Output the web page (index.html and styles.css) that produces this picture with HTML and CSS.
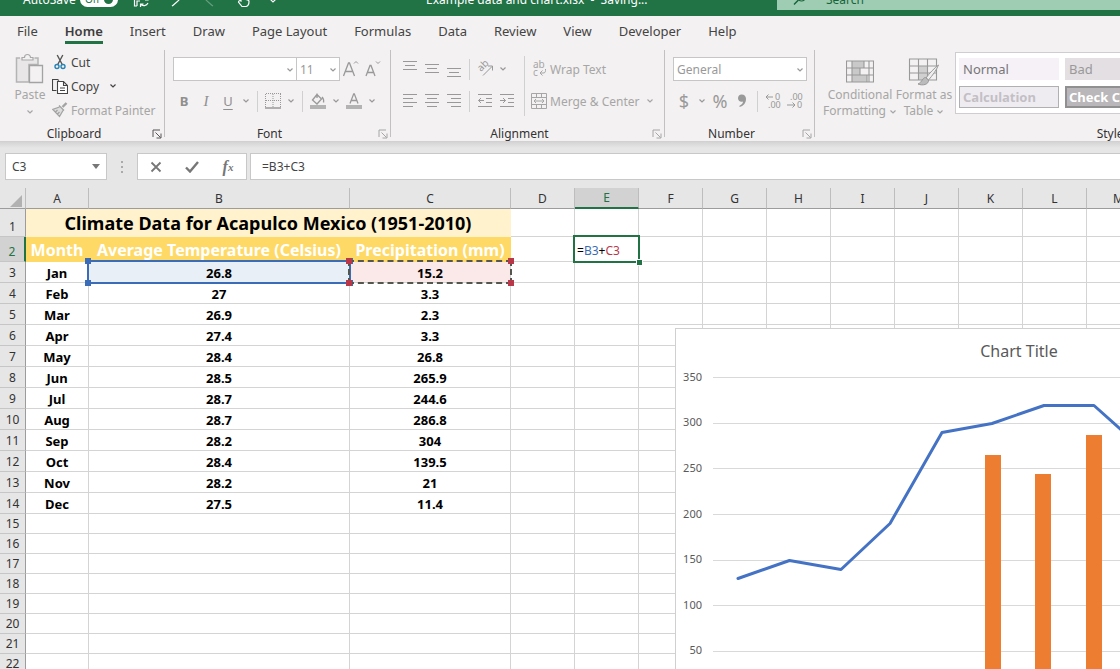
FILE: index.html
```html
<!DOCTYPE html>
<html lang="en">
<head>
<meta charset="utf-8">
<title>Example data and chart.xlsx</title>
<link rel="stylesheet" href="styles.css">
</head>
<body>
<svg class="defs" aria-hidden="true">
  <symbol id="chev" viewBox="0 0 8 8"><path d="M1.500 2.500 4 5l2.500-2.500" fill="none" stroke="currentColor" stroke-width="1.200"/></symbol>
  <symbol id="launch" viewBox="0 0 10 10"><path d="M1 8V1h7M3.500 3.500l5 5M9 4.500V9H4.500" fill="none" stroke="currentColor"/></symbol>
</svg>

<header class="titlebar">
  <div class="titlebar-inner">
    <span class="autosave">AutoSave</span>
    <button class="toggle" aria-label="AutoSave off">Off<i></i></button>
    <div class="quick">
      <svg width="17" height="18" viewBox="0 0 17 18"><path d="M4 16H1.500V2H12v3M4 16v-5h3M15 7v3h-3M15 10a4.500 4.500 0 0 0-7-1M7.500 17v-3h3M7.500 14a4.500 4.500 0 0 0 7.500-1" fill="none" stroke="#fff" stroke-width="1.200"/></svg>
      <svg width="17" height="18" viewBox="0 0 17 18"><path d="M3 2v5h5M3 7c3-4 10-5 11-1 .5 3-4 6-9 10" fill="none" stroke="#fff" stroke-width="1.200"/></svg>
      <svg width="17" height="18" viewBox="0 0 17 18" opacity=".3"><path d="M14 2v5H9M14 7C11 3 4 2 3 6c-.5 3 4 6 9 10" fill="none" stroke="#fff" stroke-width="1.200"/></svg>
      <svg width="17" height="18" viewBox="0 0 17 18"><path d="M6 11V3.500c0-2 2.500-2 2.500 0V9l4 .8c1 .2 1.500.8 1.500 1.700 0 2.500-1 4.500-3 5H7L3.500 12c.3-1.500 1.500-1.500 2.500-1z" fill="none" stroke="#fff" stroke-width="1.200"/></svg>
      <svg class="more" width="8" height="18" viewBox="0 0 8 18"><path d="M1.500 9.500 4 12 6.500 9.500" fill="none" stroke="#fff" stroke-width="1.200"/></svg>
    </div>
    <span class="filename">Example data and chart.xlsx&nbsp; -&nbsp; Saving...</span>
    <label class="search">
      <svg width="14" height="14" viewBox="0 0 14 14"><circle cx="8.500" cy="5" r="4" fill="none" stroke="#17643a" stroke-width="1.200"/><path d="M5.500 8 1 12.500" stroke="#17643a" stroke-width="1.500"/></svg>
      <input type="text" placeholder="Search" aria-label="Search">
    </label>
  </div>
</header>

<nav class="tabs">
  <a href="#">File</a><a href="#" class="active">Home</a><a href="#">Insert</a><a href="#">Draw</a><a href="#">Page Layout</a><a href="#">Formulas</a><a href="#">Data</a><a href="#">Review</a><a href="#">View</a><a href="#">Developer</a><a href="#">Help</a>
</nav>

<section class="ribbon">
  <div class="group clipboard">
    <div class="group-body">
      <button class="big dim paste">
        <svg width="30" height="32" viewBox="0 0 30 32"><path d="M5 5H1.500v24H14V11.500h9V5h-3.500" fill="#e8e6e6" stroke="#b4b4b4" stroke-width="1.500"/><path d="M7 7V4.500h2.500a3 3 0 0 1 6 0H18V7z" fill="#f3f1f1" stroke="#a9a9a9" stroke-width="1.200"/><path d="M14.500 12.500h13v17h-13z" fill="#f3f1f1" stroke="#a3a3a3" stroke-width="1.300"/></svg>
        <span>Paste</span>
        <svg class="chev"><use href="#chev"/></svg>
      </button>
      <div class="stack">
        <button class="cmd"><svg width="16" height="16" viewBox="0 0 16 16"><path d="M5.200 1 10.500 11M10.800 1 5.500 11" stroke="#555" stroke-width="1.400" fill="none"/><circle cx="5" cy="12.500" r="2" fill="none" stroke="#2583b5" stroke-width="1.400"/><circle cx="11" cy="12.500" r="2" fill="none" stroke="#2583b5" stroke-width="1.400"/></svg>Cut</button>
        <button class="cmd"><svg width="16" height="16" viewBox="0 0 16 16"><path d="M4.500 12.500h-4V1.500h5l1.500 1" fill="none" stroke="#444" stroke-width="1.100"/><path d="M5.500 3.500h6l4 4v8h-10zM11.500 3.500v4h4M8 10h5M8 12.500h5" fill="#fff" stroke="#444" stroke-width="1.100"/></svg>Copy<svg class="chev"><use href="#chev"/></svg></button>
        <button class="cmd dim"><svg width="16" height="16" viewBox="0 0 16 16"><path d="M14.500 1 10.500 5" stroke="#a3a3a3" stroke-width="2.400"/><path d="M7 3.500l5 5M7.500 5 .8 7.500 7.500 14.500 11 8.500M3.500 10l2-2M5.500 12l2-2" fill="#ddd" stroke="#a3a3a3" stroke-width="1.300"/></svg>Format Painter</button>
      </div>
    </div>
    <div class="group-label"><span>Clipboard</span><button class="launch" aria-label="Clipboard options"><svg><use href="#launch"/></svg></button></div>
  </div>

  <div class="group font">
    <div class="group-body rows">
      <div class="row">
        <label class="combo family"><select aria-label="Font name"><option></option></select><svg class="chev"><use href="#chev"/></svg></label>
        <label class="combo size"><select aria-label="Font size"><option>11</option></select><svg class="chev"><use href="#chev"/></svg></label>
        <button class="tool" aria-label="Grow font"><svg width="18" height="20" viewBox="0 0 18 20"><path d="M1.500 17 6.500 4h1l5 13M3.500 12.500h7" fill="none" stroke="currentColor" stroke-width="1.300"/><path d="m12 4.500 2-2 2 2" fill="none" stroke="currentColor"/></svg></button>
        <button class="tool" aria-label="Shrink font"><svg width="18" height="20" viewBox="0 0 18 20"><path d="M2 17 6 6.500h1L11 17M3.500 13.500h6" fill="none" stroke="currentColor" stroke-width="1.300"/><path d="m12 2.500 2 2 2-2" fill="none" stroke="currentColor"/></svg></button>
      </div>
      <div class="row">
        <button class="tool letter b">B</button><button class="tool letter i">I</button><button class="tool letter u">U</button><svg class="chev"><use href="#chev"/></svg>
        <i class="sep"></i>
        <button class="tool" aria-label="Borders"><svg width="16" height="16" viewBox="0 0 16 16"><path d="M1 .5h15M1 7.500h15M.5 1v13M8 1v13M15.500 1v13" stroke="currentColor" stroke-dasharray="1 1" fill="none"/><path d="M0 15h16" stroke="currentColor" stroke-width="1.500"/></svg></button><svg class="chev"><use href="#chev"/></svg>
        <i class="sep"></i>
        <button class="tool" aria-label="Fill color"><svg width="16" height="16" viewBox="0 0 16 16"><path d="M7 1.500 2.500 7 7 11l4.500-5zM7 .5V5M12 4c1 1 2 3 1.500 5.500" fill="none" stroke="currentColor" stroke-width="1.300"/><path d="M0 12h16v4H0z" fill="#b3b3b3"/></svg></button><svg class="chev"><use href="#chev"/></svg>
        <button class="tool" aria-label="Font color"><svg width="16" height="16" viewBox="0 0 16 16"><path d="M4 10.500 7.700.8h.6l3.700 9.700M5.200 7.500h5.600" fill="none" stroke="currentColor" stroke-width="1.300"/><path d="M0 12h16v4H0z" fill="#b3b3b3"/></svg></button><svg class="chev"><use href="#chev"/></svg>
      </div>
    </div>
    <div class="group-label"><span>Font</span><button class="launch dim" aria-label="Font options"><svg><use href="#launch"/></svg></button></div>
  </div>

  <div class="group alignment">
    <div class="group-body">
      <div class="rows">
        <div class="row">
          <button class="tool" aria-label="Top align"><svg width="14" height="18" viewBox="0 0 14 18"><path d="M0 1.500h14M2 5.500h10M0 9.500h14" stroke="currentColor"/></svg></button>
          <button class="tool" aria-label="Middle align"><svg width="14" height="18" viewBox="0 0 14 18"><path d="M0 4.500h14M2 8.500h10M0 12.500h14" stroke="currentColor"/></svg></button>
          <button class="tool" aria-label="Bottom align"><svg width="14" height="18" viewBox="0 0 14 18"><path d="M0 8.500h14M2 12.500h10M0 16.500h14" stroke="currentColor"/></svg></button>
          <i class="sep"></i>
          <button class="tool" aria-label="Orientation"><svg class="spill" width="18" height="18" viewBox="0 0 18 18"><text x="5" y="12" class="glyph" transform="rotate(-45 5 12)">ab</text><path d="M7 15.500 16 6.500M12 6h4.500v4.500" fill="none" stroke="currentColor"/></svg></button><svg class="chev"><use href="#chev"/></svg>
        </div>
        <div class="row">
          <button class="tool" aria-label="Align left"><svg width="14" height="14" viewBox="0 0 14 14"><path d="M0 .5h14M0 4.500h10M0 8.500h14M0 12.500h10" stroke="currentColor"/></svg></button>
          <button class="tool" aria-label="Center"><svg width="14" height="14" viewBox="0 0 14 14"><path d="M0 .5h14M2 4.500h10M0 8.500h14M2 12.500h10" stroke="currentColor"/></svg></button>
          <button class="tool" aria-label="Align right"><svg width="14" height="14" viewBox="0 0 14 14"><path d="M0 .5h14M4 4.500h10M0 8.500h14M4 12.500h10" stroke="currentColor"/></svg></button>
          <i class="sep"></i>
          <button class="tool" aria-label="Decrease indent"><svg width="14" height="14" viewBox="0 0 14 14"><path d="M0 .5h14M8 4.500h6M8 8.500h6M0 12.500h14M6 6.500H.5M3 4 .5 6.500 3 9" fill="none" stroke="currentColor"/></svg></button>
          <button class="tool" aria-label="Increase indent"><svg width="14" height="14" viewBox="0 0 14 14"><path d="M0 .5h14M8 4.500h6M8 8.500h6M0 12.500h14M0 6.500h5.500M3 4l2.500 2.500L3 9" fill="none" stroke="currentColor"/></svg></button>
        </div>
      </div>
      <i class="sep tall"></i>
      <div class="rows">
        <button class="cmd dim row"><svg class="spill" width="16" height="18" viewBox="0 0 16 18"><text class="glyph"><tspan x="2" y="8">ab</tspan><tspan x="2" y="16">c</tspan></text><path d="M14.500 9v1.500c0 2-1 2.500-2.500 2.500H9.500M11.500 10.500 9 13l2.500 2.500" fill="none" stroke="currentColor"/></svg>Wrap Text</button>
        <button class="cmd dim row"><svg width="16" height="16" viewBox="0 0 16 16"><path d="M.5.5h15v15H.5zM.5 4.500h15M.5 11.500h15M5.500.5v4M10.500.5v4M5.500 11.500v4M10.500 11.500v4M3 8h10M5 6 3 8l2 2M11 6l2 2-2 2" fill="none" stroke="currentColor"/></svg>Merge &amp; Center<svg class="chev"><use href="#chev"/></svg></button>
      </div>
    </div>
    <div class="group-label"><span>Alignment</span><button class="launch dim" aria-label="Alignment options"><svg><use href="#launch"/></svg></button></div>
  </div>

  <div class="group number">
    <div class="group-body rows">
      <div class="row"><label class="combo format"><select aria-label="Number format"><option>General</option></select><svg class="chev"><use href="#chev"/></svg></label></div>
      <div class="row">
        <button class="tool sym">$</button><svg class="chev"><use href="#chev"/></svg>
        <button class="tool sym">%</button>
        <button class="tool sym" aria-label="Comma style"><svg width="10" height="14" viewBox="0 0 10 14"><path d="M4.500.5C7.500.5 9 2.300 9 5c0 4-2.500 7-6.500 8v-1.300C5 10.500 6 9.200 6 7.500 3 8.300 1 6.500 1 4.200 1 2 2.500.5 4.500.5z" fill="currentColor"/></svg></button>
        <i class="sep"></i>
        <button class="tool" aria-label="Increase decimal"><svg class="spill" width="16" height="16" viewBox="0 0 16 16"><text class="digits"><tspan x="10" y="7">0</tspan><tspan x="3" y="15">.00</tspan></text><path d="M8 4H1M3.500 1.500 1 4l2.500 2.500" fill="none" stroke="currentColor"/></svg></button>
        <button class="tool" aria-label="Decrease decimal"><svg class="spill" width="16" height="16" viewBox="0 0 16 16"><text class="digits"><tspan x="3" y="7">.00</tspan><tspan x="10" y="15">0</tspan></text><path d="M0 12h8M5.500 9.500 8 12l-2.500 2.500" fill="none" stroke="currentColor"/></svg></button>
      </div>
    </div>
    <div class="group-label"><span>Number</span><button class="launch dim" aria-label="Number options"><svg><use href="#launch"/></svg></button></div>
  </div>

  <div class="group styles">
    <div class="group-body">
      <button class="big dim cond">
        <svg width="28" height="24" viewBox="0 0 28 24"><path d="M6 1h12v7H6zM6 8h8v7H6zM6 15h15v7H6z" fill="#c9c9c9"/><path d="M.5 1h27v21H.5zM.5 8h27M.5 15h27M6 1v21M14 8v7M18 1v7M21 15v7M23 1v21" fill="none" stroke="#999" stroke-width="1.100"/></svg>
        <span>Conditional</span>
        <span>Formatting<svg class="chev"><use href="#chev"/></svg></span>
      </button>
      <button class="big dim fmt">
        <svg width="32" height="28" viewBox="0 0 32 28"><path d="M10 8h9v14h-9z" fill="#d0d0d0"/><path d="M1.500 1h27v21h-27zM1.500 8h27M1.500 15h27M10.500 1v21M19.500 1v21" fill="none" stroke="#999" stroke-width="1.100"/><path d="M30.500 7c-4 3-9 8-12.500 13l2.500 2c4-4.500 8-10 10-15z" fill="#eee" stroke="#999"/><path d="M17.500 19.500c-3 0-3 4.500-7.500 6.500 4.500 2 11 .5 10.500-4z" fill="#bbb" stroke="#999"/></svg>
        <span>Format as</span>
        <span>Table<svg class="chev"><use href="#chev"/></svg></span>
      </button>
      <div class="gallery">
        <button class="style normal">Normal</button>
        <button class="style bad">Bad</button>
        <button class="style calc">Calculation</button>
        <button class="style check">Check Cell</button>
      </div>
    </div>
    <div class="group-label"><span>Styles</span></div>
  </div>
</section>

<section class="formula">
  <label class="namebox"><input type="text" value="C3" aria-label="Name box"><svg width="8" height="5" viewBox="0 0 8 5"><path d="M0 0h8L4 5z" fill="#777"/></svg></label>
  <span class="dots"><i></i><i></i><i></i></span>
  <div class="fxbuttons">
    <button aria-label="Cancel"><svg width="12" height="12" viewBox="0 0 12 12"><path d="m1.500 1.500 9 9M10.500 1.500l-9 9" stroke="#777" stroke-width="1.800"/></svg></button>
    <button aria-label="Enter"><svg width="14" height="12" viewBox="0 0 14 12"><path d="m1 6.500 4 4L13 1" fill="none" stroke="#777" stroke-width="2.400"/></svg></button>
    <button class="fx" aria-label="Insert function">f<sub>x</sub></button>
  </div>
  <input class="formula-input" type="text" value="=B3+C3" aria-label="Formula">
</section>

<main class="sheet">
  <table>
    <colgroup><col class="c-head"><col class="c-a"><col class="c-b"><col class="c-c"><col span="12" class="c-std"></colgroup>
    <thead>
      <tr><th class="corner"><svg width="12" height="12" viewBox="0 0 12 12"><path d="M12 0v12H0z" fill="#b1b1b1"/></svg></th><th>A</th><th>B</th><th>C</th><th>D</th><th class="on">E</th><th>F</th><th>G</th><th>H</th><th>I</th><th>J</th><th>K</th><th>L</th><th>M</th><th></th><th></th></tr>
    </thead>
    <tbody id="rows"></tbody>
  </table>

  <figure class="chart">
    <svg width="688" height="380" viewBox="1 1 688 380" role="img" aria-label="Chart Title">
      <text class="chart-title" x="344" y="29">Chart Title</text>
      <g class="axis"><text x="27" y="53">350</text><text x="27" y="98">300</text><text x="27" y="144">250</text><text x="27" y="190">200</text><text x="27" y="235">150</text><text x="27" y="281">100</text><text x="27" y="326">50</text></g>
      <path class="gridlines" d="M38 49.500h630M38 95.500h630M38 140.500h630M38 186.500h630M38 232.500h630M38 277.500h630M38 323.500h630"/>
      <path fill="#ed7d31" d="M310 127h16v242h-16zM360 146h16v223h-16zM411 107h16v262h-16z"/>
      <path class="series" d="M63 250.500 114.500 232.500 166 241.500 215 195.500 267 104.500 317 95.500 369 77.500H419L470 123"/>
    </svg>
  </figure>
</main>
<script src="sheet.js"></script>
</body>
</html>
```
FILE: styles.css
```css
* { box-sizing: border-box; }
body {
  margin: 0;
  height: 100vh;
  overflow: hidden;
  display: flex;
  flex-direction: column;
  background: #e6e6e6;
  color: #444;
  font-family: "Noto Sans", "Open Sans", sans-serif;
  font-size: 12px;
}
button, input, select { font: inherit; color: inherit; margin: 0; padding: 0; border: 0; background: none; }
input, select { outline: 0; min-width: 0; }
svg { display: block; flex: none; }
.defs { position: absolute; width: 0; height: 0; }
.chev { width: 8px; height: 8px; }
.spill { overflow: visible; }

/* title bar: only its lower half shows above the tabs */
.titlebar { height: 16px; flex: none; overflow: hidden; display: flex; flex-direction: column; justify-content: flex-end; background: #217346; color: #fff; }
.titlebar-inner { height: 34px; flex: none; display: flex; align-items: center; padding-left: 23px; }
.autosave { width: 57px; }
.toggle { width: 38px; height: 15px; display: flex; align-items: center; justify-content: space-between; padding: 0 5px; border-radius: 8px; background: #fff; color: #217346; font-size: 10px; }
.toggle i { width: 9px; height: 9px; border-radius: 50%; background: #217346; }
.quick { display: flex; gap: 17px; margin-left: 15px; width: 293px; }
.filename { width: 351px; white-space: nowrap; }
.search { flex: 1; height: 22px; display: flex; align-items: center; gap: 19px; padding-left: 16px; background: #9fcdb3; color: #17643a; }
.search input { width: 200px; }
.search input::placeholder { color: #17643a; opacity: 1; }

.tabs { flex: none; display: flex; gap: 27px; height: 32px; padding-left: 17px; background: #f3f1f1; font-size: 13px; line-height: 30px; }
.tabs a { color: #444; text-decoration: none; white-space: nowrap; }
.tabs .active { font-weight: 600; color: #3d3d3d; background: linear-gradient(#217346, #217346) 0 25px / 100% 3px no-repeat; }

.ribbon { flex: none; display: flex; height: 94px; overflow: hidden; background: #f3f1f1; border-bottom: 1px solid #d2d0d0; }
.group { flex: none; display: flex; flex-direction: column; margin: 2px 0 4px; border-right: 1px solid #c2c0c0; }
.group-body { flex: none; display: flex; height: 76px; }
.group-label { flex: none; position: relative; height: 16px; line-height: 16px; text-align: center; color: #333; }
.launch { position: absolute; right: 2px; top: 3px; color: #555; }
.launch svg { width: 10px; height: 10px; }
.dim, .cmd.dim { color: #a6a6a6; }
.clipboard { width: 165px; }
.font { width: 226px; }
.alignment { width: 274px; }
.number { width: 150px; }
.styles { min-width: 596px; border-right: 0; }
.group-label span { padding-right: 16px; }
.styles .group-label span { padding-right: 0; }

.big { display: flex; flex-direction: column; align-items: center; line-height: 16px; }
.big .chev { margin-top: 5px; }
.big span { display: flex; gap: 3px; }
.paste { width: 44px; padding: 3px 0 0; margin-left: 8px; }
.paste > svg:first-child { margin-bottom: 2px; }
.stack { display: grid; grid-template-rows: repeat(3, 24px); }
.cmd { display: flex; align-items: center; gap: 3px; white-space: nowrap; }
.cmd .chev { margin-left: 7px; }

.rows { display: flex; flex-direction: column; gap: 8px; padding: 7px 0 0 8px; }
.tall + .rows { padding-left: 6px; }
.row { display: flex; align-items: center; height: 24px; color: #999; }
.combo { position: relative; display: flex; height: 24px; border: 1px solid #c6c6c6; background: #fff; }
.combo select { flex: 1; appearance: none; padding-left: 3px; color: #999; }
.combo .chev { position: absolute; right: 2px; top: 8px; }
.family { width: 124px; }
.size { width: 43px; border-left: 0; }
.format { width: 134px; }
.tool { width: 22px; height: 24px; display: flex; align-items: center; justify-content: center; }
.row > .chev { margin: 0 3px; }
.letter { font-size: 13px; color: #8f8f8f; }
.b { font-weight: 700; }
.i { font-family: "Liberation Serif", serif; font-style: italic; font-size: 15px; }
.u { text-decoration: underline; text-underline-offset: 3px; }
.sep { width: 1px; height: 21px; margin: 0 4px; background: #d0d0d0; }
.sep.tall { height: 60px; margin: 6px 0 0 6px; }
.sym { font-size: 18px; }
.glyph { font-size: 10px; fill: currentColor; }
.digits { font-size: 9px; fill: currentColor; }

.styles .big { padding-top: 7px; width: 62px; }
.styles .cond { width: 66px; margin-left: 12px; }
.styles .big > svg { height: 30px; }
.gallery { flex: 1; display: grid; grid-template-columns: 100px 1fr; grid-template-rows: 22px 22px; gap: 6px; height: 62px; margin-top: 2px; padding: 5px 3px; border: 1px solid #cfcdcf; background: #fff; }
.style { text-align: left; padding-left: 4px; font-size: 13px; line-height: 20px; }
.normal { background: #f5f1f7; color: #777; }
.bad { background: #e3dfe3; color: #999; }
.calc { background: #efecf1; border: 1px solid #b0b0b0; color: #c3bfc5; font-weight: 700; line-height: 18px; padding-left: 3px; }
.check { background: #b9b7b9; border: 2px solid #909090; color: #fff; font-weight: 700; line-height: 16px; padding-left: 2px; }

.formula { flex: none; display: flex; height: 46px; padding: 11px 0 8px 5px; background: linear-gradient(#d4d4d4, #e6e6e6 6px); }
.namebox { width: 102px; display: flex; align-items: center; padding: 0 6px; border: 1px solid #c8c8c8; background: #fff; }
.namebox input { flex: 1; }
.dots { width: 30px; display: flex; flex-direction: column; align-items: center; justify-content: center; gap: 3px; }
.dots i { width: 2px; height: 2px; background: #aaa; }
.fxbuttons { width: 110px; display: flex; border: 1px solid #c8c8c8; background: #fff; }
.fxbuttons button { flex: 1; display: flex; align-items: center; justify-content: center; }
.fxbuttons .fx { font: italic 700 16px "Liberation Serif", serif; color: #777; }
.fx sub { font-size: 11px; }
.formula-input { flex: 1; margin-left: 3px; padding-left: 11px; border: 1px solid #c8c8c8; border-right: 0; background: #fff; }

.sheet { position: relative; flex: 1; min-height: 0; overflow: hidden; background: #fff; color: #000; }
.sheet table { table-layout: fixed; width: 1279px; border-collapse: separate; border-spacing: 0; }
.c-head { width: 26px; }
.c-a { width: 63px; }
.c-b { width: 261px; }
.c-c { width: 161px; }
.c-std { width: 64px; }
.sheet th { padding: 0; background: #e6e6e6; color: #333; font-weight: 400; border-right: 1px solid #bdbdbd; border-bottom: 1px solid #9c9c9c; }
.sheet thead th { height: 21px; padding-top: 1px; line-height: 18px; }
.sheet thead th.on { background: #d2d2d2; color: #217346; border-bottom: 2px solid #217346; }
.corner svg { margin: 4px 0 0 10px; }
.sheet tbody th { border-right-color: #9c9c9c; border-bottom-color: #c6c6c6; vertical-align: bottom; line-height: 18px; }
.sheet tbody th.on { background: #d2d2d2; color: #217346; border-right: 2px solid #217346; }
.sheet td { position: relative; padding: 0; border-right: 1px solid #d4d4d4; border-bottom: 1px solid #d4d4d4; text-align: center; white-space: nowrap; }
.h28 { height: 28px; }
.h25 { height: 25px; }
.h21 { height: 21px; }
.h20 { height: 20px; }
.sheet .data { font-weight: 700; font-size: 13px; line-height: 18px; padding-top: 2px; }
.sheet .title { background: #fff2cc; border-color: #fff2cc; font-weight: 700; font-size: 18px; line-height: 26px; }
.sheet .field { background: #ffd966; border-color: #ffd966; color: #fff; font-weight: 700; font-size: 16px; line-height: 22px; padding-top: 2px; }
.sheet .edit { text-align: left; padding: 2px 0 0 2px; }
.ref-b { color: #3a6db5; }
.ref-c { color: #b8384a; }

/* range frames lie over the cell borders */
.frame { position: absolute; inset: -2px; border: 2px solid; z-index: 1; }
.frame i { position: absolute; width: 6px; height: 6px; background: #3b6cb8; }
.frame i:nth-child(1) { left: -4px; top: -4px; }
.frame i:nth-child(2) { right: -4px; top: -4px; }
.frame i:nth-child(3) { left: -4px; bottom: -4px; }
.frame i:nth-child(4) { right: -4px; bottom: -4px; }
.sheet .blue { background: #e8eff7; }
.sheet .pink { background: #fbe9ea; }
.blue .frame { color: #3b6cb8; }
.pink .frame { border: 2px dashed #55564e; z-index: 2; }
.pink .frame i { background: #b8384a; }
.edit .frame { color: #217346; }
.edit .frame i { right: -4px; bottom: -4px; left: auto; top: auto; background: #217346; outline: 1px solid #fff; width: 5px; height: 5px; }

.chart { position: absolute; left: 675px; top: 140px; margin: 0; border: 1px solid #d0d0d0; background: #fff; z-index: 3; }
.chart text { fill: #595959; }
.chart-title { font-size: 16px; text-anchor: middle; }
.axis { font-size: 11px; text-anchor: end; }
.gridlines { stroke: #d9d9d9; fill: none; }
.series { fill: none; stroke: #4472c4; stroke-width: 3; stroke-linejoin: round; stroke-linecap: round; }
```
FILE: sheet.js
```js
const data = [
  ["Jan", "26.8", "15.2"], ["Feb", "27", "3.3"], ["Mar", "26.9", "2.3"], ["Apr", "27.4", "3.3"],
  ["May", "28.4", "26.8"], ["Jun", "28.5", "265.9"], ["Jul", "28.7", "244.6"], ["Aug", "28.7", "286.8"],
  ["Sep", "28.2", "304"], ["Oct", "28.4", "139.5"], ["Nov", "28.2", "21"], ["Dec", "27.5", "11.4"]
];
const blanks = n => "<td></td>".repeat(n);
const corners = "<i></i><i></i><i></i><i></i>";
const html = [];
html.push(`<tr class="h28"><th>1</th><td class="title" colspan="3">Climate Data for Acapulco Mexico (1951-2010)</td>${blanks(12)}</tr>`);
html.push(`<tr class="h25"><th class="on">2</th><td class="field">Month</td><td class="field">Average Temperature (Celsius)</td><td class="field">Precipitation (mm)</td><td></td><td class="edit">=<span class="ref-b">B3</span>+<span class="ref-c">C3</span><span class="frame"><i></i></span></td>${blanks(10)}</tr>`);
data.forEach((row, i) => {
  const cells = row.map((value, c) => {
    const ref = i === 0 && c > 0;
    const tone = ref ? (c === 1 ? " blue" : " pink") : "";
    return `<td class="data${tone}">${value}${ref ? `<span class="frame">${corners}</span>` : ""}</td>`;
  }).join("");
  html.push(`<tr class="h21"><th>${i + 3}</th>${cells}${blanks(12)}</tr>`);
});
for (let n = 15; n <= 22; n++) html.push(`<tr class="h20"><th>${n}</th>${blanks(15)}</tr>`);
document.getElementById("rows").innerHTML = html.join("");
```
